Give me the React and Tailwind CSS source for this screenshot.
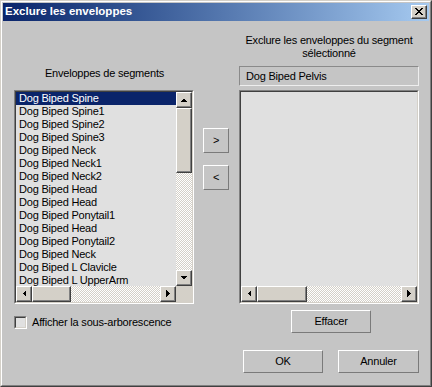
const items = [
  "Dog Biped Spine",
  "Dog Biped Spine1",
  "Dog Biped Spine2",
  "Dog Biped Spine3",
  "Dog Biped Neck",
  "Dog Biped Neck1",
  "Dog Biped Neck2",
  "Dog Biped Head",
  "Dog Biped Head",
  "Dog Biped Ponytail1",
  "Dog Biped Head",
  "Dog Biped Ponytail2",
  "Dog Biped Neck",
  "Dog Biped L Clavicle",
  "Dog Biped L UpperArm",
];

const raised =
  "bg-[#d4d0c8] border border-t-white border-l-white border-r-[#404040] border-b-[#404040]";
const raisedInner = "h-full w-full border-r border-b border-[#808080] flex items-center justify-center";
const track =
  "bg-[repeating-conic-gradient(#ffffff_0_25%,#d4d0c8_0_50%)] bg-[length:2px_2px]";

const Arrow = ({ dir }) => {
  const pts = {
    up: "0,4 7,4 3.5,0.5",
    down: "0,0 7,0 3.5,3.5",
    left: "4,0 4,7 0.5,3.5",
    right: "0,0 0,7 3.5,3.5",
  }[dir];
  const vertical = dir === "up" || dir === "down";
  return (
    <svg width={vertical ? 7 : 4} height={vertical ? 4 : 7} shapeRendering="crispEdges">
      <polygon points={pts} fill="#000" />
    </svg>
  );
};

const ScrollBtn = ({ dir, className = "" }) => (
  <div className={`${raised} ${className}`}>
    <div className={raisedInner}>
      <Arrow dir={dir} />
    </div>
  </div>
);

const Thumb = ({ className = "" }) => (
  <div className={`${raised} ${className}`}>
    <div className="h-full w-full border-r border-b border-[#808080]" />
  </div>
);

const Sunken = ({ className = "", children }) => (
  <div className={`border border-t-[#808080] border-l-[#808080] border-r-white border-b-white ${className}`}>
    <div className="h-full w-full border border-t-[#404040] border-l-[#404040] border-r-[#d4d0c8] border-b-[#d4d0c8] flex flex-col overflow-hidden">
      {children}
    </div>
  </div>
);

const HScroll = ({ thumb }) => (
  <div className="flex h-[16px] flex-1">
    <ScrollBtn dir="left" className="w-[16px] h-[16px]" />
    <Thumb className={`${thumb} h-[16px]`} />
    <div className={`flex-1 ${track}`} />
    <ScrollBtn dir="right" className="w-[16px] h-[16px]" />
  </div>
);

const Button = ({ children, className = "" }) => (
  <div
    className={`border border-t-white border-l-white border-r-[#7a7a7a] border-b-[#7a7a7a] flex items-center justify-center text-black ${className}`}
  >
    {children}
  </div>
);

export default function App() {
  return (
    <div className="w-[432px] h-[387px] bg-[#c5c5c5] border border-t-[#d4d0c8] border-l-[#d4d0c8] border-r-[#404040] border-b-[#404040] font-['Liberation_Sans',Arial,sans-serif] text-[11px] text-black tracking-[-0.2px] select-none">
      <div className="h-full border border-t-white border-l-white border-r-[#808080] border-b-[#808080] p-px flex flex-col">
        {/* title bar */}
        <div className="h-[18px] flex items-center justify-between bg-linear-to-r from-[#0a246a] to-[#a6caf0] pl-[2px] pr-[2px]">
          <span className="text-white font-bold text-[11.5px] tracking-normal leading-none">
            Exclure les enveloppes
          </span>
          <div className={`${raised} w-[16px] h-[14px]`}>
            <div className={raisedInner}>
              <svg width="8" height="7" viewBox="0 0 8 7" shapeRendering="crispEdges">
                <path
                  d="M0 0h2v1h-2zM1 1h2v1h-2zM2 2h4v1h-4zM3 3h2v1h-2zM2 4h4v1h-4zM1 5h2v1h-2zM0 6h2v1h-2zM6 0h2v1h-2zM5 1h2v1h-2zM5 5h2v1h-2zM6 6h2v1h-2z"
                  fill="#000"
                />
              </svg>
            </div>
          </div>
        </div>

        {/* body */}
        <div className="flex items-start pl-[11px]">
          {/* left column */}
          <div className="w-[180px] mt-[46px] flex flex-col">
            <div className="leading-[13px] text-center pl-[1px]">Enveloppes de segments</div>
            <Sunken className="mt-[10px] h-[214px] bg-[#e0e0e0]">
              <div className="flex flex-1 min-h-0">
                <div className="flex-1 overflow-hidden">
                  {items.map((it, i) => (
                    <div
                      key={i}
                      className={`h-[13px] leading-[13px] pl-[3px] whitespace-nowrap ${
                        i === 0 ? "bg-[#0a246a] text-white" : ""
                      }`}
                    >
                      {it}
                    </div>
                  ))}
                </div>
                <div className="w-[16px] flex flex-col">
                  <ScrollBtn dir="up" className="h-[16px]" />
                  <Thumb className="h-[65px]" />
                  <div className={`flex-1 ${track}`} />
                  <ScrollBtn dir="down" className="h-[16px]" />
                </div>
              </div>
              <div className="flex h-[16px]">
                <HScroll thumb="w-[39px]" />
                <div className="w-[16px] bg-[#d4d0c8]" />
              </div>
            </Sunken>
            <div className="mt-[12px] flex items-center">
              <div className="w-[13px] h-[13px] border border-t-[#808080] border-l-[#808080] border-r-white border-b-white">
                <div className="h-full w-full border border-t-[#404040] border-l-[#404040] border-r-[#d4d0c8] border-b-[#d4d0c8] bg-[#e0e0e0]" />
              </div>
              <span className="ml-[5px] leading-[13px]">Afficher la sous-arborescence</span>
            </div>
          </div>

          {/* middle buttons */}
          <div className="ml-[9px] w-[26px] mt-[107px] flex flex-col gap-[12px]">
            <Button className="h-[25px]">&gt;</Button>
            <Button className="h-[25px]">&lt;</Button>
          </div>

          {/* right column */}
          <div className="ml-[10px] w-[180px] mt-[13px] flex flex-col">
            <div className="leading-[13px] text-center">
              Exclure les enveloppes du segment
              <br />
              sélectionné
            </div>
            <div className="mt-[6px] h-[20px] border border-t-[#8a8a8a] border-l-[#8a8a8a] border-r-[#eeeeee] border-b-[#eeeeee] flex items-center pl-[6px]">
              Dog Biped Pelvis
            </div>
            <Sunken className="mt-[4px] h-[214px] bg-[#e0e0e0]">
              <div className="flex-1" />
              <div className="flex h-[16px]">
                <HScroll thumb="w-[50px]" />
              </div>
            </Sunken>
            <Button className="mt-[6px] ml-[52px] w-[80px] h-[23px]">Effacer</Button>
          </div>
        </div>

        {/* bottom buttons */}
        <div className="mt-[17px] flex justify-end gap-[15px] pr-[10px]">
          <Button className="w-[80px] h-[23px]">OK</Button>
          <Button className="w-[81px] h-[23px]">Annuler</Button>
        </div>
      </div>
    </div>
  );
}
